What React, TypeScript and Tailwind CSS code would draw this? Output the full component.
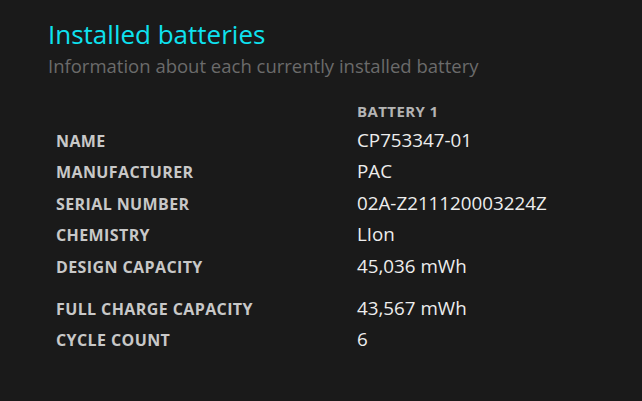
const rows: { label: string; value: string; gap?: boolean }[] = [
  { label: 'NAME', value: 'CP753347-01' },
  { label: 'MANUFACTURER', value: 'PAC' },
  { label: 'SERIAL NUMBER', value: '02A-Z211120003224Z' },
  { label: 'CHEMISTRY', value: 'LIon' },
  { label: 'DESIGN CAPACITY', value: '45,036 mWh' },
  { label: 'FULL CHARGE CAPACITY', value: '43,567 mWh', gap: true },
  { label: 'CYCLE COUNT', value: '6' },
];

export default function App() {
  return (
    <div
      className="h-[401px] w-[642px] overflow-hidden bg-[#1a1a1a] pl-[48px] pt-[17px]"
      style={{ fontFamily: '"Open Sans", "Noto Sans", sans-serif' }}
    >
      <h1 className="text-[26px] leading-[34px] text-[#0ee2f0]">Installed batteries</h1>
      <p className="mt-[3px] text-[18.5px] leading-[24px] text-[#6b6b6b]">
        Information about each currently installed battery
      </p>

      <div className="mt-[21px] pl-[8px]">
        <div className="grid h-[27.5px] grid-cols-[301px_1fr] items-baseline leading-[24px]">
          <span />
          <span className="text-[15px] font-bold tracking-[0.4px] text-[#b4b4b4]">BATTERY 1</span>
        </div>
        {rows.map((r) => (
          <div
            key={r.label}
            className={`grid h-[31.5px] grid-cols-[301px_1fr] items-baseline leading-[26px] ${r.gap ? 'mt-[10.5px]' : ''}`}
          >
            <span className="text-[16px] font-bold tracking-[0.4px] text-[#c8c8c8]">{r.label}</span>
            <span className="text-[18.8px] text-[#ededed]">{r.value}</span>
          </div>
        ))}
      </div>
    </div>
  );
}
